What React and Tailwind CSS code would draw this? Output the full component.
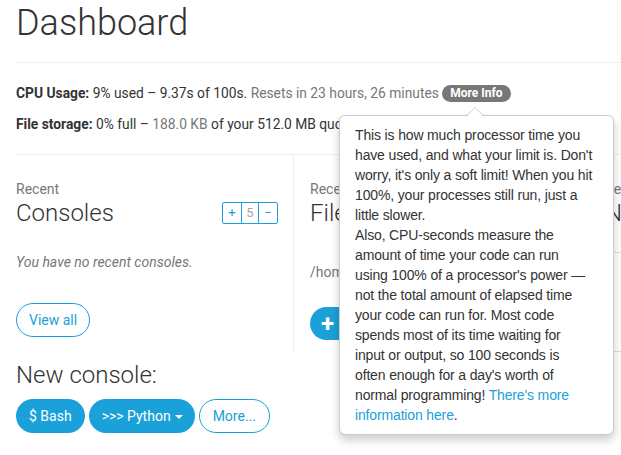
import React from 'react';

const blue = 'bg-[#1ba1d9]';

const Page = () => {
  return (
    <div className="relative w-[621px] h-[455px] overflow-hidden bg-white font-['Roboto',sans-serif] text-[#333]">
      <div className="w-[960px] pl-4">
        <h1 className="pt-[1px] text-[36px] font-light leading-[44px]">Dashboard</h1>
        <hr className="mt-[17px] border-[#eee]" />

        <p className="mt-[20px] text-[13.8px] leading-[20px]">
          <b>CPU Usage:</b> 9% used – 9.37s of 100s. <span className="text-[#777]">Resets in 23 hours, 26 minutes</span>{' '}
          <span className="inline-block rounded-full bg-[#777] px-[8px] text-[12px] font-bold leading-[17px] text-white align-[1px]">More Info</span>
        </p>
        <p className="mt-[11px] text-[13.8px] leading-[20px]">
          <b>File storage:</b> 0% full – <span className="text-[#777]">188.0 KB</span> of your 512.0 MB quota
        </p>
        <hr className="mt-[20px] border-[#eee]" />

        <div className="flex">
          {/* consoles */}
          <div className="w-[278px] border-r border-[#eee] pt-[26px] pr-[15px] pb-[8px]">
            <div className="text-[14px] leading-[16px] text-[#777]">Recent</div>
            <div className="flex items-center justify-between">
              <div className="text-[24px] font-light leading-[32px]">Consoles</div>
              <div className="flex h-[22px] rounded-[2px] border border-[#1ba1d9] text-[13px] leading-[20px]">
                <span className="w-[18px] text-center text-[#1ba1d9]">+</span>
                <span className="w-[18px] border-x border-[#1ba1d9] text-center text-[#aaa]">5</span>
                <span className="w-[18px] text-center text-[#1ba1d9]">−</span>
              </div>
            </div>
            <p className="mt-[23px] text-[14px] italic leading-[20px] text-[#777]">You have no recent consoles.</p>
            <button className="mt-[31px] h-[34px] rounded-full border border-[#1ba1d9] px-[12px] text-[14px] text-[#1ba1d9]">View all</button>
          </div>

          {/* files */}
          <div className="w-[295px] border-r border-[#eee] pt-[26px] pl-4 pr-[15px]">
            <div className="text-[14px] leading-[16px] text-[#777]">Recent</div>
            <div className="text-[24px] font-light leading-[32px]">Files</div>
            <p className="mt-[33px] text-[14px] leading-[20px] text-[#777]">/home/username</p>
            <button className={`${blue} mt-[25px] flex h-[33px] items-center rounded-full px-[11px] text-[14px] text-white`}>
              <span className="text-[24px] font-bold leading-none">+</span>
              <span className="ml-2">Open another file</span>
            </button>
          </div>

          {/* notebooks */}
          <div className="w-[295px] pt-[26px] pl-4">
            <div className="text-[14px] leading-[16px] text-[#777]">Recent</div>
            <div className="text-[24px] font-light leading-[32px]">Notebooks</div>
            <div className="mt-[23px] h-[100px] border-y border-[#ddd]" />
          </div>
        </div>

        <h2 className="mt-[7px] text-[24px] font-light leading-[32px]">New console:</h2>
        <div className="mt-[8px] flex gap-[4px] text-[14px]">
          <button className={`${blue} h-[34px] rounded-full px-[13px] text-white`}>$ Bash</button>
          <button className={`${blue} flex h-[34px] items-center rounded-full pl-[13px] pr-[12px] text-white`}>
            &gt;&gt;&gt; Python
            <span className="ml-[4px] mt-[2px] border-x-[4px] border-t-[4px] border-x-transparent border-t-white" />
          </button>
          <button className="h-[34px] rounded-full border border-[#1ba1d9] px-[13px] text-[#1ba1d9]">More...</button>
        </div>
      </div>

      {/* popover */}
      <div className="absolute left-[339px] top-[115px] w-[275px] whitespace-nowrap rounded-[6px] border border-black/20 bg-white px-[15px] py-[9px] font-['Liberation_Sans',Arial,sans-serif] text-[14px] leading-[20px] text-[#333] shadow-[0_5px_10px_rgba(0,0,0,0.2)]">
        <div className="absolute -top-[9px] left-[126px] h-0 w-0 border-x-[9px] border-b-[9px] border-x-transparent border-b-black/20" />
        <div className="absolute -top-[8px] left-[127px] h-0 w-0 border-x-[8px] border-b-[8px] border-x-transparent border-b-white" />
        <p className="tracking-[-0.15px]">
          This is how much processor time you
          <br />
          have used, and what your limit is. Don't
          <br />
          worry, it's only a soft limit! When you hit
          <br />
          100%, your processes still run, just a
          <br />
          little slower.
        </p>
        <p className="tracking-[-0.15px]">
          Also, CPU-seconds measure the
          <br />
          amount of time your code can run
          <br />
          using 100% of a processor's power —
          <br />
          not the total amount of elapsed time
          <br />
          your code can run for. Most code
          <br />
          spends most of its time waiting for
          <br />
          input or output, so 100 seconds is
          <br />
          often enough for a day's worth of
          <br />
          normal programming! <a className="text-[#1ba1d9]">There's more</a>
          <br />
          <a className="text-[#1ba1d9]">information here</a>.
        </p>
      </div>
    </div>
  );
};

export default function App() {
  return <Page />;
}
